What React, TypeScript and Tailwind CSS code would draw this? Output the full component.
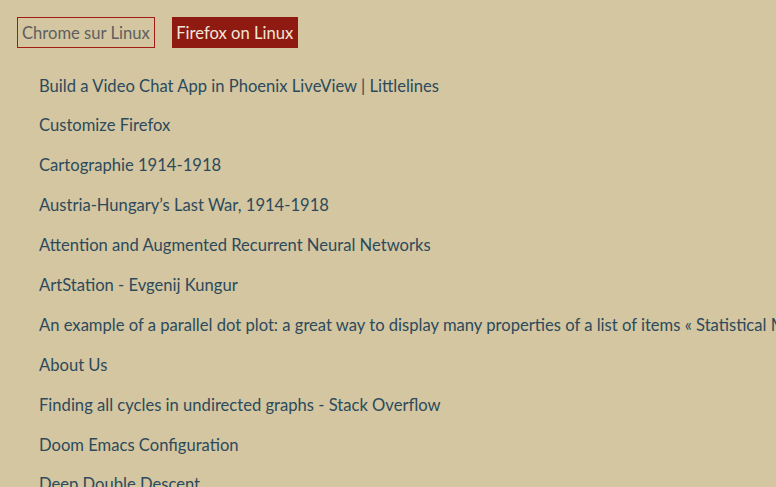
const links = [
  "Build a Video Chat App in Phoenix LiveView | Littlelines",
  "Customize Firefox",
  "Cartographie 1914-1918",
  "Austria-Hungary’s Last War, 1914-1918",
  "Attention and Augmented Recurrent Neural Networks",
  "ArtStation - Evgenij Kungur",
  "An example of a parallel dot plot: a great way to display many properties of a list of items « Statistical Modeling, Causal Inference, and Social Science",
  "About Us",
  "Finding all cycles in undirected graphs - Stack Overflow",
  "Doom Emacs Configuration",
  "Deep Double Descent",
];

export default function App() {
  return (
    <div className="min-h-screen overflow-hidden bg-[#d3c6a0] px-[17px] pt-[17px] font-['Lato',sans-serif] text-[16.6px]">
      <div className="flex gap-[17px]">
        <button className="h-[31px] border border-[#a31c14] px-[4px] pt-[1px] text-[#5f5f5f]">
          Chrome sur Linux
        </button>
        <button className="h-[31px] bg-[#8f1a12] px-[4.5px] pt-[1px] text-[#efe6d8]">
          Firefox on Linux
        </button>
      </div>
      <ul className="mt-[18px] pl-[22px]">
        {links.map((l) => (
          <li key={l} className="flex h-[39.9px] items-center whitespace-nowrap text-[#2d4a5c]">
            <a href="#">{l}</a>
          </li>
        ))}
      </ul>
    </div>
  );
}
